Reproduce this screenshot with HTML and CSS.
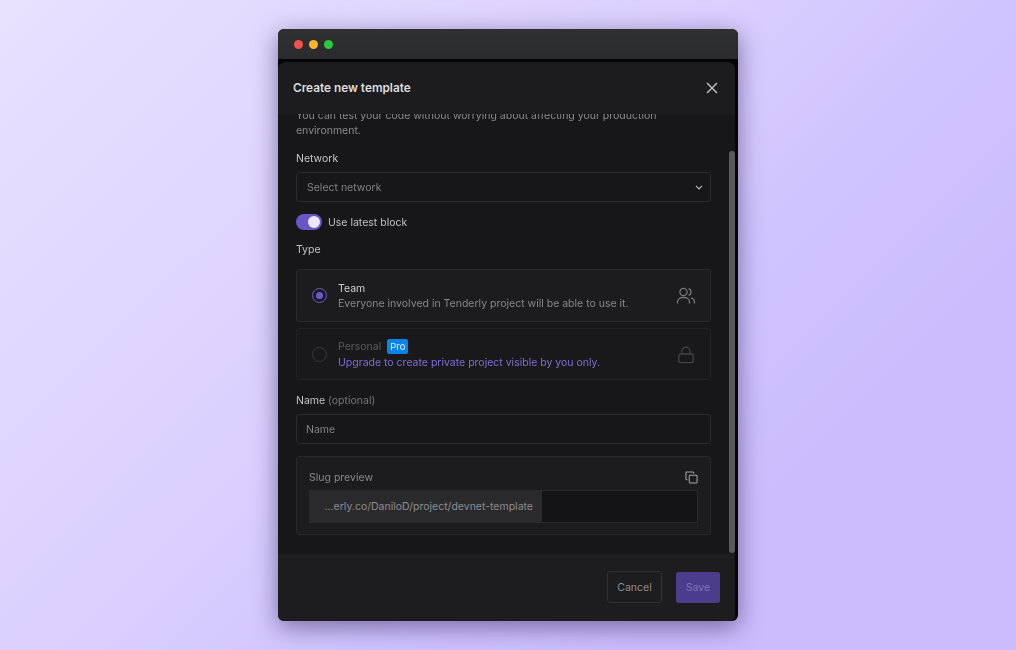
FILE: index.html
```html
<!DOCTYPE html>
<html lang="en">
<head>
<meta charset="utf-8">
<title>Create new template</title>
<link rel="stylesheet" href="styles.css">
</head>
<body>
<main class="window">
  <div class="titlebar">
    <span class="dot dot-red"></span>
    <span class="dot dot-yellow"></span>
    <span class="dot dot-green"></span>
  </div>
  <section class="modal">
    <header class="modal-head">
      <h1>Create new template</h1>
      <svg class="close" width="14" height="14" viewBox="0 0 14 14"><path d="M2 2l10 10M12 2L2 12"/></svg>
    </header>
    <div class="modal-body">
      <div class="scrollbar"></div>
      <p class="intro">You can test your code without worrying about affecting your production environment.</p>
      <div class="label label-network">Network</div>
      <div class="field select">
        <span>Select network</span>
        <svg width="10" height="10" viewBox="0 0 10 10"><path d="M2 3.8l3 3 3-3"/></svg>
      </div>
      <div class="toggle-row">
        <span class="toggle"><span class="knob"></span></span>
        <span>Use latest block</span>
      </div>
      <div class="label label-type">Type</div>
      <div class="card card-team">
        <span class="radio radio-on"><span></span></span>
        <div class="card-text">
          <div class="card-title">Team</div>
          <div class="card-desc">Everyone involved in Tenderly project will be able to use it.</div>
        </div>
        <svg class="card-icon" width="20" height="20" viewBox="0 0 20 20"><circle cx="7.5" cy="6" r="3.6"/><path d="M1.5 17.5v-1.3a4.7 4.7 0 0 1 4.7-4.7h2.6a4.7 4.7 0 0 1 4.7 4.7v1.3M12.6 2.6a3.6 3.6 0 0 1 0 6.8M15 11.8a4.7 4.7 0 0 1 3.5 4.4v1.3"/></svg>
      </div>
      <div class="card card-personal">
        <span class="radio"></span>
        <div class="card-text">
          <div class="card-title muted">Personal <span class="badge">Pro</span></div>
          <div class="card-link">Upgrade to create private project visible by you only.</div>
        </div>
        <svg class="card-icon dim" width="20" height="20" viewBox="0 0 20 20"><rect x="2.8" y="9" width="14.4" height="8.6" rx="2"/><path d="M6 9V6.2a4 4 0 0 1 8 0V9"/></svg>
      </div>
      <div class="label label-name">Name <span class="optional">(optional)</span></div>
      <div class="field name-field"><span>Name</span></div>
      <div class="slug">
        <div class="slug-head">
          <span>Slug preview</span>
          <svg width="13" height="13" viewBox="0 0 14 14"><rect x="4.6" y="4.6" width="8.4" height="8.4" rx="1"/><path d="M9.4 2.6V2a1 1 0 0 0-1-1H2a1 1 0 0 0-1 1v6.4a1 1 0 0 0 1 1h.6"/></svg>
        </div>
        <div class="slug-box"><span class="slug-value">...erly.co/DaniloD/project/devnet-template</span></div>
      </div>
    </div>
    <footer class="modal-foot">
      <span class="btn btn-cancel">Cancel</span>
      <span class="btn btn-save">Save</span>
    </footer>
  </section>
</main>
</body>
</html>
```
FILE: styles.css
```css
* { box-sizing: border-box; }
html, body { height: 100%; }
body {
  margin: 0;
  overflow: hidden;
  background: linear-gradient(135deg, #e8e1ff 0%, #dacffe 44%, #d0c4fe 60%, #cbbdfd 76%, #cbbdfd 100%);
  font-family: Inter, "Liberation Sans", sans-serif;
  font-size: 10.5px;
  color: #a8a8aa;
  padding: 29px 0 0 278px;
}
.window {
  width: 460px;
  height: 592px;
  background: #050506;
  border-radius: 6px;
  overflow: hidden;
  box-shadow: 0 6px 24px rgba(30, 15, 70, .5);
  display: flex;
  flex-direction: column;
  filter: blur(.4px);
}
.titlebar {
  height: 30px;
  flex: none;
  background: linear-gradient(#2f3031, #2a2b2c);
  display: flex;
  align-items: center;
  gap: 6px;
  padding: 0 0 0 16px;
}
.dot { width: 9px; height: 9px; border-radius: 50%; }
.dot-red { background: #f4504a; }
.dot-yellow { background: #fbb52d; }
.dot-green { background: #2ac840; }
.modal {
  margin: 3px 3px 0 0;
  flex: 1;
  min-height: 0;
  background: #171719;
  border-radius: 8px 8px 6px 6px;
  display: flex;
  flex-direction: column;
  overflow: hidden;
}
.modal-head {
  flex: none;
  height: 52px;
  background: #1c1c1e;
  display: flex;
  align-items: center;
  justify-content: space-between;
  padding: 0 16px 0 15px;
  position: relative;
  z-index: 1;
}
.modal-head h1 {
  margin: 0;
  font-size: 11.8px;
  font-weight: 600;
  color: #dcdcdd;
}
.close path { stroke: #b9b9ba; stroke-width: 1.5; fill: none; }
.modal-body {
  flex: 1;
  min-height: 0;
  position: relative;
  padding: 0 24px 0 18px;
  overflow: hidden;
}
.scrollbar {
  position: absolute;
  right: 0;
  top: 37px;
  bottom: 1px;
  width: 6px;
  border-radius: 3px;
  background: #59595b;
}
.intro {
  margin: -6px 0 0;
  line-height: 15px;
  color: #8a8a8c;
}
.label { line-height: 14px; color: #c4c4c5; }
.label-network { margin-top: 14px; }
.field {
  height: 30px;
  margin-top: 6px;
  border: 1px solid #2b2b2d;
  border-radius: 3px;
  color: #828284;
  display: flex;
  align-items: center;
  justify-content: space-between;
}
.select { padding: 0 6px 0 10px; }
.select path { stroke: #b9b9ba; stroke-width: 1.2; fill: none; }
.toggle-row {
  margin-top: 12px;
  height: 16px;
  display: flex;
  align-items: center;
  gap: 6px;
  color: #c0c0c1;
}
.toggle {
  width: 26px;
  height: 16px;
  border-radius: 8px;
  background: #6a56c6;
  display: flex;
  align-items: center;
  justify-content: flex-end;
  padding-right: 2px;
}
.knob { width: 12px; height: 12px; border-radius: 50%; background: #ece8fb; }
.label-type { margin-top: 13px; }
.card {
  border: 1px solid #29292b;
  border-radius: 3px;
  display: flex;
  align-items: center;
  padding: 0 14px 0 15px;
  background: #1c1c1e;
}
.card-team { height: 53px; margin-top: 12px; }
.card-personal { height: 52px; margin-top: 6px; background: #19191b; border-color: #232325; padding-top: 1px; }
.card-personal .card-title { margin: -1px 0 1px; }
.radio {
  width: 15px;
  height: 15px;
  border-radius: 50%;
  border: 1.5px solid #3a3a3c;
  flex: none;
  display: flex;
  align-items: center;
  justify-content: center;
}
.radio-on { border-color: #6c58cc; }
.radio-on span { width: 7px; height: 7px; border-radius: 50%; background: #6c58cc; }
.card-text { margin-left: 11px; flex: 1; line-height: 15px; }
.card-title { color: #d0d0d1; }
.card-title.muted { color: #5a5a5c; }
.card-desc { color: #87878a; }
.card-link { color: #806cd4; }
.badge {
  display: inline-block;
  margin-left: 3px;
  padding: 0 3px;
  height: 15px;
  line-height: 15px;
  font-size: 9.5px;
  border-radius: 2px;
  background: #0b84ea;
  color: #e4f2ff;
  vertical-align: top;
}
.card-icon { stroke: #77777a; stroke-width: 1.3; fill: none; flex: none; }
.card-icon.dim { stroke: #434345; }
.label-name { margin-top: 14px; }
.optional { color: #747476; }
.name-field { padding: 1px 9px 0; }
.slug {
  margin-top: 12px;
  height: 79px;
  border: 1px solid #29292b;
  border-radius: 3px;
  background: #1c1c1e;
  padding: 0 12px;
}
.slug-head {
  height: 33px;
  display: flex;
  align-items: center;
  justify-content: space-between;
  color: #87878a;
  padding-top: 7px;
}
.slug-head svg { stroke: #a4a4a6; stroke-width: 1.1; fill: none; }
.slug-box {
  height: 33px;
  border: 1px solid #29292b;
  background: #141416;
  display: flex;
}
.slug-value {
  width: 233px;
  margin: -1px 0 -1px -1px;
  background: #2a2a2d;
  color: #8c8c8e;
  display: flex;
  align-items: center;
  justify-content: flex-end;
  padding-right: 9px;
  white-space: nowrap;
}
.modal-foot {
  flex: none;
  height: 67px;
  background: #1d1d1f;
  display: flex;
  justify-content: flex-end;
  align-items: center;
  gap: 14px;
  padding: 0 15px 1px 0;
}
.btn {
  height: 32px;
  display: flex;
  align-items: center;
  justify-content: center;
  border-radius: 3px;
}
.btn-cancel { width: 55px; border: 1px solid #323234; color: #8d8d8f; }
.btn-save { width: 44px; height: 31px; background: #4c3d8c; color: #7e74ad; }
```
